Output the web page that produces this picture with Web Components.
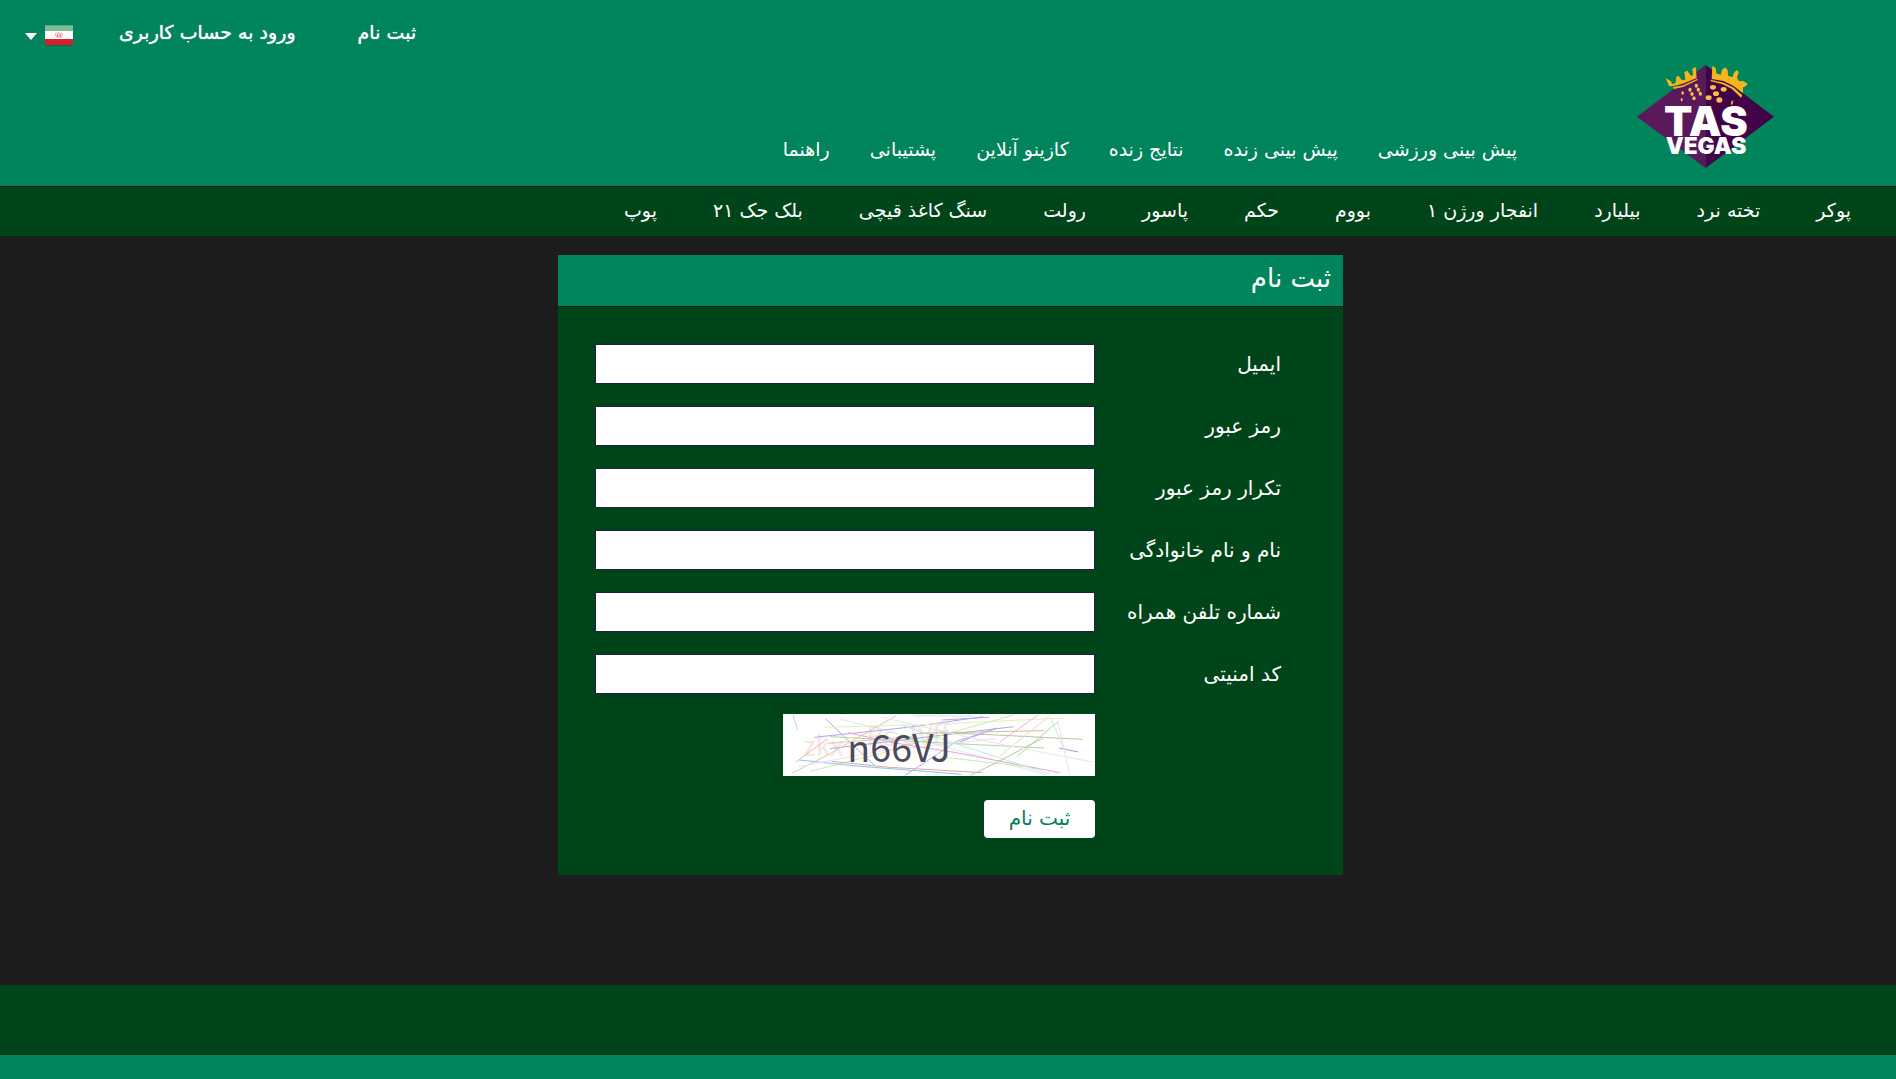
<!DOCTYPE html>
<html lang="fa" dir="rtl">
<head>
<meta charset="utf-8">
<meta name="viewport" content="width=device-width, initial-scale=1">
<title>ثبت نام</title>
<style>
:root { --brand: #00845c; --deep: #00451a; --page: #1c1c1c; }
body { margin: 0; background: var(--page); color: #fff; font-family: "DejaVu Sans", sans-serif; font-size: 19px; }
</style>
</head>
<body>
<tas-app></tas-app>
<script>
const define = (name, html, setup) => customElements.define(name, class extends HTMLElement {
  connectedCallback() {
    if (this.shadowRoot) return;
    const t = document.createElement('template');
    t.innerHTML = html;
    this.attachShadow({ mode: 'open' }).append(t.content.cloneNode(true));
    if (setup) setup(this.shadowRoot, this);
  }
});

define('tas-logo', `
<style>:host{display:block} a,svg{display:block}</style>
<a href="#" aria-label="TAS VEGAS">
<svg width="137" height="103" viewBox="52 45 411 309" direction="ltr">
  <path d="M258 45 52 200 258 354z" fill="#59195a"/>
  <path d="M258 45 463 200 258 354z" fill="#430348"/>
  <g fill="#f5b51b">
    <path d="M138 84 154 94 158 103 168 98 170 80 176 77 187 91 197 89 194 66 203 62 214 78 220 74 218 56 228 50 231 84 189 101 157 109 148 108z"/>
    <path d="M160 112 190 106 234 86 234 90 190 111 163 117z"/>
    <path d="M278 47 288 54 290 70 303 75 307 60 316 52 324 60 325 77 338 82 344 66 354 60 357 68 352 84 358 94 370 93 384 101 378 109 370 112 370 130 341 107 311 93 276 87z"/>
    <path d="M273 89 312 98 341 112 368 136 364 143 337 117 309 103 273 94z"/>
    <path d="M334 155 341 150 339 162 334 165z"/>
  </g>
  <g fill="#f3c04a">
    <ellipse cx="230" cy="107" rx="5" ry="6"/><ellipse cx="236" cy="119" rx="5" ry="6"/><ellipse cx="242" cy="131" rx="5" ry="6"/>
    <ellipse cx="211" cy="119" rx="5" ry="6"/><ellipse cx="217" cy="132" rx="5" ry="6"/><ellipse cx="223" cy="145" rx="5" ry="6"/>
    <ellipse cx="189" cy="129" rx="4" ry="5"/><ellipse cx="186" cy="149" rx="3" ry="5"/>
    <ellipse cx="280" cy="112" rx="9" ry="7"/><ellipse cx="312" cy="118" rx="9" ry="7"/><ellipse cx="289" cy="131" rx="9" ry="7"/>
    <ellipse cx="267" cy="143" rx="9" ry="7"/><ellipse cx="299" cy="150" rx="9" ry="8"/>
  </g>
  <g fill="#fff" font-family="Inter, sans-serif" font-weight="900" text-anchor="middle">
    <text x="259" y="258" font-size="124">TAS</text>
    <text x="259" y="313" font-size="68">VEGAS</text>
  </g>
</svg></a>`);

define('tas-nav', `
<style>
:host{display:block}
nav{display:flex;flex-wrap:wrap;gap:var(--nav-gap,40px)}
::slotted(a){color:#fff;text-decoration:none;white-space:nowrap;font-size:19px;line-height:24px}
</style>
<nav><slot></slot></nav>`);

define('tas-user-bar', `
<style>
:host{display:flex;align-items:center;gap:62px}
a{color:#fff;text-decoration:none;font-size:19px;line-height:24px;white-space:nowrap;text-shadow:0 0 1px #fff}
.end{display:flex;align-items:center;gap:46px}
button{display:flex;align-items:center;gap:8px;border:0;background:none;padding:8px 0 0;height:34px}
svg{display:block}
</style>
<a href="#">ثبت نام</a>
<div class="end">
<a href="#">ورود به حساب کاربری</a>
<button type="button" aria-label="زبان">
<svg width="28" height="22" viewBox="0 0 28 22">
  <rect y="1" width="28" height="20" rx="1" fill="#076b4c"/>
  <rect width="28" height="20" rx="1" fill="#fff"/>
  <path d="M0 0h28v6H0z" fill="#7cbd97"/><path d="M0 0h28v1H0z" fill="#5baa7e"/>
  <path d="M0 14h28v6H0z" fill="#d8202a"/>
  <g fill="none" stroke="#ea8b8b"><path d="M14 7v6M11.500 7.500c-1.500 2-1 4 1.500 5M16.500 7.500c1.500 2 1 4-1.500 5M12.500 8.500v3.500M15.500 8.500v3.500"/></g>
</svg>
<svg width="12" height="7" viewBox="0 0 12 7"><path d="M0 0h12L6 7z" fill="#fff"/></svg>
</button>
</div>`);

define('tas-header', `
<style>
:host{display:flex;background:var(--brand);border-bottom:1px solid var(--page);padding:0 122px 0 25px}
tas-logo{padding:65px 0 18px}
.main{align-self:flex-end;margin-inline-start:120px;padding-bottom:25px;flex:1}
tas-user-bar{align-self:flex-start;padding-top:15px}
</style>
<tas-logo></tas-logo>
<tas-nav class="main">
<a href="#">پیش بینی ورزشی</a><a href="#">پیش بینی زنده</a><a href="#">نتایج زنده</a><a href="#">کازینو آنلاین</a><a href="#">پشتیبانی</a><a href="#">راهنما</a>
</tas-nav>
<tas-user-bar></tas-user-bar>`);

define('tas-games', `
<style>
:host{display:block;background:var(--deep);padding:11px 45px 14px;--nav-gap:56px}
</style>
<tas-nav>
<a href="#">پوکر</a><a href="#">تخته نرد</a><a href="#">بیلیارد</a><a href="#">انفجار ورژن ۱</a><a href="#">بووم</a><a href="#">حکم</a><a href="#">پاسور</a><a href="#">رولت</a><a href="#">سنگ کاغذ قیچی</a><a href="#">بلک جک ۲۱</a><a href="#">پوپ</a>
</tas-nav>`);

define('tas-field', `
<style>
:host{display:flex;align-items:center}
label{width:186px;flex:none;font-size:20px;line-height:28px;white-space:nowrap}
input{flex:1;min-width:0;box-sizing:border-box;height:40px;border:1px solid #1d1f45;border-radius:0;background:#fff;padding:0 12px;font:inherit;color:#222;outline:0}
</style>
<label for="f"></label><input id="f">`, (root, host) => {
  root.querySelector('label').textContent = host.getAttribute('label');
  root.querySelector('input').type = host.getAttribute('type') || 'text';
});

define('tas-captcha', `
<style>:host{display:block;width:312px} svg{display:block;background:#fff}</style>
<svg width="312" height="62" viewBox="0 0 936 186" direction="ltr" fill="none" stroke-width="3">
  <g fill="#f6e6e3" font-family="'Noto Sans CJK SC', sans-serif" stroke="none">
    <text x="60" y="125" font-size="80">zkx</text>
    <text x="250" y="96" font-size="80">Rs</text>
    <text x="360" y="92" font-size="80">JVff</text>
  </g>
  <g opacity=".85">
  <path stroke="#9fdcc5" d="M30 4 44 48"/>
  <path stroke="#cdeee3" d="M172 16 280 42 790 182"/>
  <path stroke="#9c9ce8" d="M127 14 273 153M94 70 376 40 600 8M476 18 618 10M140 104 692 38M530 84 640 42"/>
  <path stroke="#d8d4f4" d="M390 6H570"/>
  <path stroke="#dcbf96" d="M26 178 132 124 340 5M136 88 392 68"/>
  <path stroke="#f0ac9a" d="M38 144 134 74"/>
  <path stroke="#e2ecb4" d="M124 40 420 32 842 12"/>
  <path stroke="#c0ea9f" d="M82 172 300 116 560 40 690 4M470 128 760 162"/>
  <path stroke="#f28bd8" d="M196 56 330 86 520 116 830 176"/>
  <path stroke="#f3a1ee" d="M650 84 764 4"/>
  <path stroke="#a5ece4" d="M358 34 520 90 800 180"/>
  <path stroke="#7db8ea" d="M48 138 220 156 400 170 535 181"/>
  <path stroke="#d59a9a" d="M146 142 320 160 598 176"/>
  <path stroke="#c3b18c" d="M396 58 782 50"/>
  <path stroke="#b4b79c" d="M470 56 620 62 898 76M562 184 640 146 780 72"/>
  <path stroke="#ac9ff2" d="M366 184 470 116 520 82 640 44"/>
  <path stroke="#a4cf90" d="M142 68 540 90 784 102M704 126 826 22"/>
  <path stroke="#dfd3bd" d="M650 126 800 6"/><path stroke="#a583c7" d="M828 102 886 114"/>
  <path stroke="#b9eec4" d="M804 14 842 104"/><path stroke="#f5d5dc" d="M824 20 860 182"/>
  <path stroke="#e3e3e3" d="M296 10 640 88 928 144"/><path stroke="#e6dbf5" d="M46 158 300 110 640 74"/>
  </g>
  <text x="193" y="145" font-size="113" fill="#4e4a5c" stroke="none" font-family="'Noto Sans CJK SC', sans-serif">n66VJ</text>
</svg>`);

define('tas-register', `
<style>
:host{display:block}
h1{margin:0;background:var(--brand);border-bottom:1px solid var(--page);font-weight:400;font-size:26px;line-height:30px;padding:8px 12px 13px}
form{background:var(--deep);padding:37px 62px 37px 37px;display:flex;flex-direction:column;gap:22px}
.after{display:flex;flex-direction:column;align-items:flex-start;gap:24px;padding-inline-start:186px;margin-top:-2px}
button{border:0;border-radius:4px;background:#fff;color:var(--brand);font-family:inherit;font-size:20px;font-weight:400;width:111px;height:38px;padding:0 0 2px}
</style>
<h1>ثبت نام</h1>
<form>
<tas-field label="ایمیل" type="email"></tas-field>
<tas-field label="رمز عبور" type="password"></tas-field>
<tas-field label="تکرار رمز عبور" type="password"></tas-field>
<tas-field label="نام و نام خانوادگی"></tas-field>
<tas-field label="شماره تلفن همراه" type="tel"></tas-field>
<tas-field label="کد امنیتی"></tas-field>
<div class="after"><tas-captcha></tas-captcha><button type="button">ثبت نام</button></div>
</form>`);

define('tas-footer', `
<style>
:host{display:flex;flex-direction:column;flex:1}
.links{height:70px;background:var(--deep)} .base{flex:1;min-height:20px;background:var(--brand)}
</style>
<div class="links"></div><div class="base"></div>`);

define('tas-app', `
<style>
:host{display:flex;flex-direction:column;min-height:100vh}
main{padding:19px 0 110px}
tas-register{width:41.4%;min-width:600px;margin-inline-start:calc(100% * 7 / 24)}
</style>
<tas-header></tas-header>
<tas-games></tas-games>
<main><tas-register></tas-register></main>
<tas-footer></tas-footer>`);
</script>
</body>
</html>
